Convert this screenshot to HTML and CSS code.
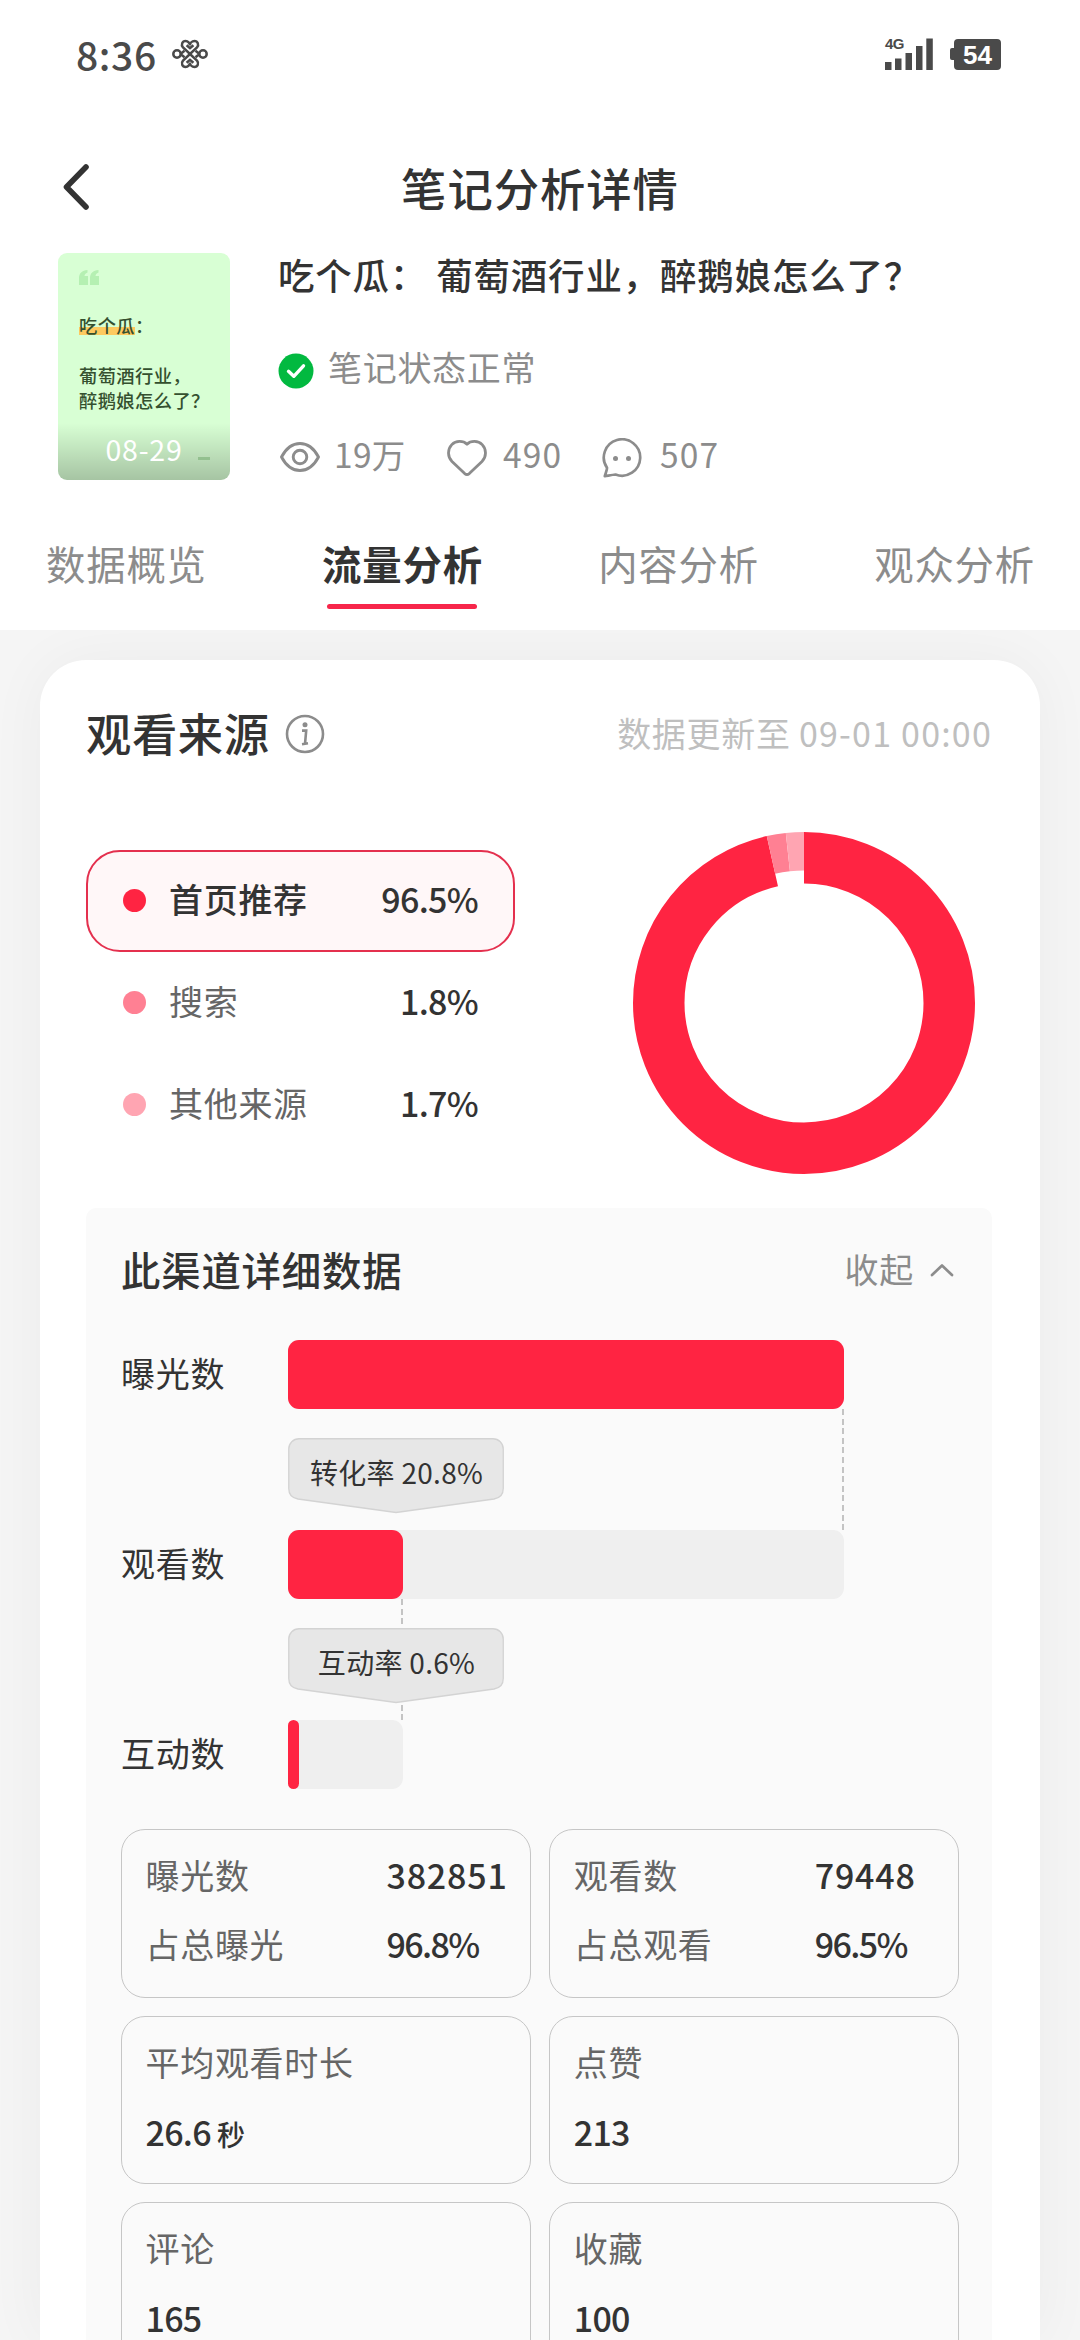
FILE: index.html
```html
<!DOCTYPE html>
<html lang="zh-CN">
<head>
<meta charset="utf-8">
<title>笔记分析详情</title>
<link rel="stylesheet" href="styles.css">
</head>
<body>
<header class="top">
  <div class="status">
    <span class="clock">8:36</span>
    <svg class="knot" width="36" height="30" viewBox="0 0 36 30" fill="none" stroke="#4a4a4a" stroke-width="2.5">
      <path d="M18 15 L11 8.4 C8.6 5.6 10.4 2 13.5 2 C16 2 18 4 17.9 6.5 C18 4 20 2 22.5 2 C25.6 2 27.4 5.6 25 8.4 Z"/>
      <path d="M18 15 L11 21.6 C8.6 24.4 10.4 28 13.5 28 C16 28 18 26 17.9 23.5 C18 26 20 28 22.5 28 C25.6 28 27.4 24.4 25 21.6 Z"/>
      <path d="M14.6 6.2 L18 9.2 L21.4 6.2 M14.6 23.8 L18 20.8 L21.4 23.8 M8.5 15 L12.5 11.8 M8.5 15 L12.5 18.2 M27.5 15 L23.5 11.8 M27.5 15 L23.5 18.2"/>
      <circle cx="5" cy="15" r="3.7"/><circle cx="31" cy="15" r="3.7"/>
    </svg>
    <span class="signal">
      <span class="net">4G</span>
      <svg width="48" height="34" viewBox="0 0 48 34" fill="#4a4a4a">
        <path d="M0 25h6.5v8H0zM10 21.500h6.500v11.500H10zM20.500 16h6.500v17h-6.500zM31 9h6.500v24H31zM41.300 1.500h6.500V33h-6.500z"/>
      </svg>
    </span>
    <span class="battery">54</span>
  </div>
  <div class="nav">
    <svg class="back" width="30" height="50" viewBox="0 0 30 50" fill="none" stroke="#333" stroke-width="5.6" stroke-linecap="round" stroke-linejoin="round"><path d="M26 5 L6.500 25 L26 45"/></svg>
    <h1>笔记分析详情</h1>
  </div>
  <div class="note">
    <div class="thumb">
      <svg class="quote" width="20" height="15" viewBox="0 0 20 15" fill="#b5f0b2"><path d="M0 15V8C0 3.500 3 .5 8.500 0v2.500C6.500 3.200 5.500 4.500 5.500 6H9v9zM11 15V8c0-4.500 3-7.500 8.500-8v2.500C17.500 3.200 16.500 4.500 16.500 6H20v9z"/></svg>
      <p><mark>吃个瓜</mark>：</p>
      <p class="second">葡萄酒行业，<br>醉鹅娘怎么了？</p>
      <div class="date">08-29<i></i></div>
    </div>
    <div class="info">
      <h2>吃个瓜： 葡萄酒行业，醉鹅娘怎么了？</h2>
      <div class="state">
        <svg width="36" height="36" viewBox="0 0 36 36" fill="none"><circle cx="18" cy="18" r="17.500" fill="#02b940"/><path d="M10.500 18.300 L15.800 23.300 L25.500 12.800" stroke="#fff" stroke-width="3.400" stroke-linecap="round" stroke-linejoin="round"/></svg>
        <span>笔记状态正常</span>
      </div>
      <div class="counts">
        <svg class="eye" width="40" height="32" viewBox="0 0 40 32" fill="none" stroke="#8c8c8c" stroke-width="2.900"><path d="M1.500 16C6.500 6.500 13 2.500 20 2.500S33.500 6.500 38.500 16C33.500 25.500 27 29.500 20 29.500S6.500 25.500 1.500 16Z" stroke-linejoin="round"/><circle cx="20" cy="16" r="6.800"/></svg>
        <span class="views">19万</span>
        <svg class="heart" width="40" height="36" viewBox="0 0 40 36" fill="none" stroke="#8c8c8c" stroke-width="2.800" stroke-linejoin="round"><path d="M20 4.200C16.500 .8 9 .2 4.800 4.600C.2 9.500 .6 17 5 21.500L17.700 33.600Q20 35.500 22.300 33.600L35 21.500C39.400 17 39.800 9.500 35.200 4.600C31 .2 23.500 .8 20 4.200Z"/></svg>
        <span class="likes">490</span>
        <svg class="bubble" width="40" height="40" viewBox="0 0 40 40" fill="none" stroke="#8c8c8c" stroke-width="2.700" stroke-linejoin="round"><path d="M2.800 38.200C3.500 35.500 5.200 32 5 29.800A18.200 18.200 0 1 1 13.500 36.500C10.500 36.800 6.500 37.600 2.800 38.200Z"/><g fill="#8c8c8c" stroke="none"><circle cx="13.500" cy="20.500" r="2.500"/><circle cx="26.500" cy="20.500" r="2.500"/></g></svg>
        <span>507</span>
      </div>
    </div>
  </div>
  <nav class="tabs">
    <a>数据概览</a><a class="active">流量分析</a><a>内容分析</a><a>观众分析</a>
  </nav>
</header>

<main>
  <section class="card">
    <div class="card-head">
      <h3>观看来源</h3>
      <svg class="tip" width="40" height="40" viewBox="0 0 40 40" fill="none" stroke="#8c8c8c"><circle cx="20" cy="20" r="18" stroke-width="2.600"/><circle cx="20" cy="10.700" r="2.500" fill="#8c8c8c" stroke="none"/><path d="M17 16.600h4.200L20 29.800 M17 30.200l6-1" stroke-width="2.600"/></svg>
      <span class="updated">数据更新至 <span>09-01 00:00</span></span>
    </div>
    <div class="source">
      <ul class="legend">
        <li class="on"><i class="c1"></i><span>首页推荐</span><b>96.5%</b></li>
        <li><i class="c2"></i><span>搜索</span><b>1.8%</b></li>
        <li><i class="c3"></i><span>其他来源</span><b>1.7%</b></li>
      </ul>
      <svg class="donut" width="342" height="342" viewBox="-171 -171 342 342" fill="none">
        <circle r="145.250" stroke="#ff2442" stroke-width="51.500" pathLength="1000" stroke-dasharray="965 35" transform="rotate(-90)"/>
        <circle r="151.750" stroke="#ff8093" stroke-width="38.500" pathLength="1000" stroke-dasharray="18 982" stroke-dashoffset="-965" transform="rotate(-90)"/>
        <circle r="151.750" stroke="#ffa5b2" stroke-width="38.500" pathLength="1000" stroke-dasharray="17 983" stroke-dashoffset="-983" transform="rotate(-90)"/>
      </svg>
    </div>

    <div class="panel">
      <div class="panel-head">
        <h4>此渠道详细数据</h4>
        <span class="fold">收起</span>
        <svg width="24" height="16" viewBox="0 0 24 16" fill="none" stroke="#8c8c8c" stroke-width="2.700" stroke-linecap="round" stroke-linejoin="round"><path d="M2 13 L12 3.500 L22 13"/></svg>
      </div>
      <div class="funnel">
        <span>曝光数</span>
        <div class="track"><div class="fill" style="width:556px"></div></div>
        <div class="link" style="width:556px">
          <div class="chip"><svg width="216" height="76" viewBox="0 0 216 76"><path d="M11 .75H205A10.200 10.200 0 0 1 215.250 11V50.500Q215.250 59.500 206 61L108 74.500L10 61Q.75 59.500 .75 50.500V11A10.200 10.200 0 0 1 11 .75Z" fill="#e7e7e7" stroke="#d3d3d3" stroke-width="1.300"/></svg><span>转化率 20.8%</span></div>
        </div>
        <span>观看数</span>
        <div class="track"><div class="fill" style="width:115px"></div></div>
        <div class="link" style="width:115px">
          <div class="chip"><svg width="216" height="76" viewBox="0 0 216 76"><path d="M11 .75H205A10.200 10.200 0 0 1 215.250 11V50.500Q215.250 59.500 206 61L108 74.500L10 61Q.75 59.500 .75 50.500V11A10.200 10.200 0 0 1 11 .75Z" fill="#e7e7e7" stroke="#d3d3d3" stroke-width="1.300"/></svg><span>互动率 0.6%</span></div>
        </div>
        <span>互动数</span>
        <div class="track" style="width:115px"><div class="fill thin" style="width:11px"></div></div>
      </div>
      <div class="cells">
        <div class="cell pair"><span>曝光数</span><b>382851</b><span>占总曝光</span><b class="pct">96.8%</b></div>
        <div class="cell pair"><span>观看数</span><b>79448</b><span>占总观看</span><b class="pct">96.5%</b></div>
        <div class="cell"><span>平均观看时长</span><b>26.6<small>秒</small></b></div>
        <div class="cell"><span>点赞</span><b>213</b></div>
        <div class="cell"><span>评论</span><b>165</b></div>
        <div class="cell"><span>收藏</span><b>100</b></div>
      </div>
    </div>
  </section>
</main>
</body>
</html>
```
FILE: styles.css
```css
* { box-sizing: border-box; margin: 0; padding: 0; }
html { height: 2340px; overflow: hidden; }
body {
  display: flex; flex-direction: column;
  width: 1080px; height: 2340px; overflow: hidden;
  background: #f5f5f5; color: #333;
  font-family: "Noto Sans CJK SC", sans-serif;
  font-size: 34px; letter-spacing: .700px; white-space: nowrap;
}
svg { display: block; flex: none; }
h1, h2, h3, h4, b { font-weight: 500; }
i { font-style: normal; }

.top { background: #fff; flex: none; height: 630px; }
.status { display: flex; align-items: center; height: 108px; padding: 0 79px 0 76px; color: #4a4a4a; }
.clock { font-size: 39px; font-weight: 500; letter-spacing: .600px; line-height: 54px; width: 96px; }
.signal { position: relative; margin-left: auto; margin-right: 17px; }
.net { position: absolute; left: 0; top: 0; font: 700 15px/14px "Liberation Sans", sans-serif; letter-spacing: -.5px; }
.battery {
  position: relative; width: 47px; height: 31px; margin-left: 4px; border-radius: 4px; background: #4a4a4a; color: #fff;
  font: 700 26px/32px "Liberation Sans", sans-serif; letter-spacing: 0; text-align: center;
}
.battery::before { content: ""; position: absolute; left: -4px; top: 9px; width: 5px; height: 12px; border-radius: 2px 0 0 2px; background: #4a4a4a; }

.nav { display: grid; grid-template-columns: 60px 1fr 60px; align-items: center; height: 145px; padding: 12px 60px 0; }
h1 { font-size: 45.300px; letter-spacing: 1px; text-align: center; line-height: 60px; }

.note { display: flex; gap: 48px; padding: 0 58px; height: 227px; }
.thumb {
  position: relative; width: 172px; height: 227px; border-radius: 9px; overflow: hidden;
  background: #d8ffd4; padding: 17px 0 0 21px; font-size: 18.300px; font-weight: 500; letter-spacing: .400px; line-height: 25px; color: #34502f;
}
.quote { margin-bottom: 28px; }
.thumb mark { color: inherit; background: linear-gradient(transparent 15px, #fdc95f 15px, #fdc95f 23px, transparent 23px); }
.thumb .second { margin-top: 25px; }
.date {
  position: absolute; left: 0; right: 0; bottom: 0; height: 57px; text-align: center;
  background: linear-gradient(rgba(0,0,0,0), rgba(0,0,0,.23)); color: #fff;
  font-size: 28.500px; font-weight: 400; letter-spacing: .800px; line-height: 52px;
}
.date i { position: absolute; left: 140px; bottom: 20px; width: 12px; height: 3px; background: #93c08f; }
h2 { font-size: 36.500px; letter-spacing: .800px; line-height: 44px; }
.state { display: flex; align-items: center; gap: 14px; height: 46px; margin-top: 46px; color: #8c8c8c; }
.state svg { margin-top: 9px; }
.counts { display: flex; align-items: center; height: 48px; margin-top: 41px; color: #8c8c8c; line-height: 48px; font-size: 33.500px; letter-spacing: 1.200px; }
.counts svg { margin-top: 5px; margin-left: 2px; }
.counts span { margin-left: 14px; }
.views { width: 111px; letter-spacing: .300px; }
.counts .heart { margin-top: 7px; }
.likes { width: 97px; }
.counts .likes { margin-left: 16px; }
.counts .bubble { margin-top: 7px; }
.counts .bubble + span { margin-left: 18px; }

.tabs { display: flex; justify-content: space-between; padding: 56px 45px 0 46px; font-size: 39.400px; letter-spacing: .800px; color: #8c8c8c; }
.tabs a { line-height: 54px; }
.active { color: #333; font-weight: 700; }
.active::after { content: ""; display: block; width: 150px; height: 5px; margin: 14px auto 0; border-radius: 3px; background: #f7264a; }

main { display: flex; flex: 1; min-height: 0; padding: 30px 40px 0; overflow: hidden; }
.card { display: flex; flex-direction: column; flex: 1; min-height: 0; background: #fff; border-radius: 46px 46px 0 0; padding: 42px 48px 0 46px; box-shadow: 0 0 60px rgba(0,0,0,.045); }
.card-head { display: flex; flex: none; align-items: center; height: 60px; }
h3 { font-size: 45.300px; letter-spacing: .600px; line-height: 60px; }
.tip { margin: 4px 0 0 15px; }
.updated { margin-left: auto; color: #bfbfbf; }
.updated span { letter-spacing: 1.200px; }
.source { display: flex; flex: none; justify-content: space-between; height: 342px; margin-top: 70px; padding-right: 17px; }
.legend { list-style: none; width: 429px; padding-top: 18px; }
.legend li { display: flex; align-items: center; height: 102px; padding: 0 35px 6px 37px; color: #666; border: 2px solid transparent; }
.legend .on { background: #fff7f8; border-color: #e4304e; border-radius: 34px; color: #333; font-weight: 500; }
.legend i { width: 23px; height: 23px; border-radius: 50%; margin: 5px 23px 0 -2px; }
.legend b { margin-left: auto; color: #333; letter-spacing: -.700px; }
.c1 { background: #ff2442; } .c2 { background: #ff8093; } .c3 { background: #ffa5b2; }

.panel { display: flex; flex-direction: column; flex: 1; min-height: 0; overflow: hidden; margin-top: 34px; border-radius: 10px 10px 0 0; background: #fafafa; padding: 30px 33px 0 35px; }
.panel-head { display: flex; flex: none; align-items: center; height: 60px; padding-right: 5px; }
h4 { font-size: 39.400px; letter-spacing: .800px; }
.fold { margin-left: auto; margin-right: 16px; color: #8c8c8c; }
.panel-head svg { margin-top: 4px; }
.funnel { display: grid; flex: none; grid-template-columns: 167px 556px; grid-template-rows: 69px 121px 69px 121px 69px; margin-top: 42px; }
.funnel > span { line-height: 65px; }
.track { height: 69px; border-radius: 11px; background: #efefef; }
.fill { height: 69px; border-radius: 11px; background: #ff2442; }
.fill.thin { border-radius: 5.500px; }
.link {
  grid-column: 2; padding-top: 29px;
  background: repeating-linear-gradient(#c4c4c4 0 6px, transparent 6px 9.600px) right top / 2px 100% no-repeat;
}
.chip { display: grid; width: 216px; height: 76px; }
.chip > * { grid-area: 1 / 1; }
.chip span { font-size: 28px; line-height: 69px; text-align: center; letter-spacing: .300px; padding-left: 1px; }
.cells { display: grid; flex: none; grid-template-columns: 1fr 1fr; grid-auto-rows: 168.500px; gap: 18.200px 18.500px; margin-top: 40px; }
.cell { border: 1px solid #c6c6c6; border-radius: 24px; padding: 22px 0 0 23.500px; color: #666; line-height: 46px; }
.cell > * { display: block; }
.cell > b { color: #333; margin-top: 24px; font-size: 34px; letter-spacing: -.700px; }
.pair { display: grid; grid-template-columns: 241px 1fr; grid-auto-rows: 46px; row-gap: 22.500px; }
.pair > b { margin: 0; letter-spacing: .800px; }
.pair > .pct { letter-spacing: -1.600px; }
.cell small { font-size: 28px; margin-left: 6px; }
```
